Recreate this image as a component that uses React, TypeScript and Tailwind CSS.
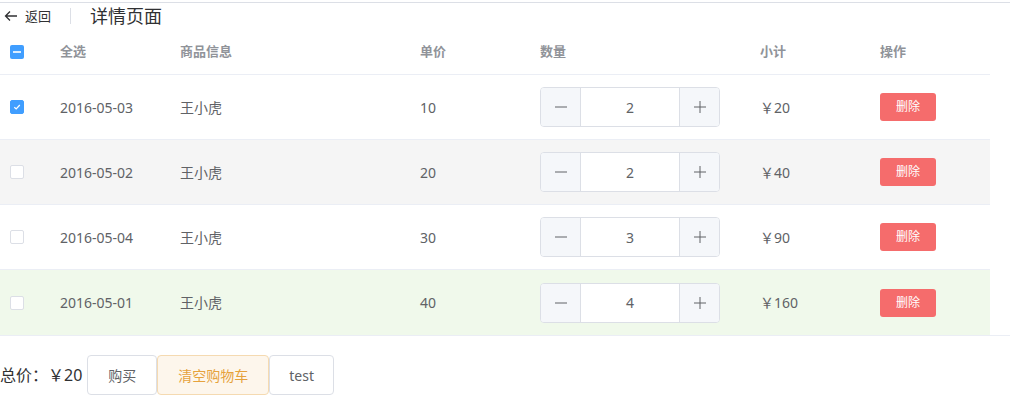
import React from "react";

const rows = [
  { date: "2016-05-03", name: "王小虎", price: 10, qty: 2, sub: 20, checked: true, bg: "bg-white" },
  { date: "2016-05-02", name: "王小虎", price: 20, qty: 2, sub: 40, checked: false, bg: "bg-[#f5f5f5]" },
  { date: "2016-05-04", name: "王小虎", price: 30, qty: 3, sub: 90, checked: false, bg: "bg-white" },
  { date: "2016-05-01", name: "王小虎", price: 40, qty: 4, sub: 160, checked: false, bg: "bg-[#f0f9eb]" },
];

function Check({ checked }: { checked: boolean }) {
  if (checked) {
    return (
      <span className="w-[14px] h-[14px] rounded-[2px] bg-[#409eff] border border-[#409eff] flex items-center justify-center">
        <svg width="10" height="10" viewBox="0 0 10 10">
          <path d="M2.3 5.2 L4.2 7 L7.8 3" stroke="#fff" strokeWidth="1.2" fill="none" />
        </svg>
      </span>
    );
  }
  return <span className="w-[14px] h-[14px] rounded-[2px] bg-white border border-[#dcdfe6] block" />;
}

function NumInput({ v }: { v: number }) {
  return (
    <div className="w-[180px] h-[40px] border border-[#dcdfe6] rounded-[4px] flex overflow-hidden bg-white">
      <div className="w-[40px] h-full bg-[#f5f7fa] border-r border-[#dcdfe6] flex items-center justify-center">
        <svg width="14" height="14" viewBox="0 0 14 14">
          <path d="M1 7 H13" stroke="#606266" strokeWidth="1" />
        </svg>
      </div>
      <div className="flex-1 flex items-center justify-center text-[14px] text-[#606266]">{v}</div>
      <div className="w-[40px] h-full bg-[#f5f7fa] border-l border-[#dcdfe6] flex items-center justify-center">
        <svg width="14" height="14" viewBox="0 0 14 14">
          <path d="M1 7 H13 M7 1 V13" stroke="#606266" strokeWidth="1" />
        </svg>
      </div>
    </div>
  );
}

export default function App() {
  const font = { fontFamily: '"Noto Sans", "Noto Sans CJK SC", sans-serif' };
  return (
    <div className="w-[1010px] h-[404px] bg-white overflow-hidden" style={font}>
      <div className="h-[2px]" />
      <div className="border-t border-[#dcdfe6]" />
      <div className="h-[26px] flex items-center">
        <div className="flex items-center pl-[3px] text-[#303133]">
          <svg width="16" height="16" viewBox="0 0 16 16" className="mr-[6px]">
            <path d="M14 8 H2.5 M7 3.5 L2.5 8 L7 12.5" stroke="#303133" strokeWidth="1.3" fill="none" />
          </svg>
          <span className="text-[13px] leading-none">返回</span>
        </div>
        <div className="w-px h-[16px] bg-[#dcdfe6] mx-[19px]" />
        <span className="text-[18px] leading-none text-[#303133]">详情页面</span>
      </div>
      <div className="w-[1010px] border-b border-[#ebeef5]">
        <div className="w-[990px] h-[46px] flex items-center border-b border-[#ebeef5] text-[13px] font-bold text-[#909399]">
          <div className="w-[50px] pl-[10px] flex items-center">
            <span className="w-[14px] h-[14px] rounded-[2px] bg-[#409eff] flex items-center justify-center">
              <span className="w-[8px] h-[2px] bg-white/80 block" />
            </span>
          </div>
          <div className="w-[120px] pl-[10px]">全选</div>
          <div className="w-[240px] pl-[10px]">商品信息</div>
          <div className="w-[120px] pl-[10px]">单价</div>
          <div className="w-[220px] pl-[10px]">数量</div>
          <div className="w-[120px] pl-[10px]">小计</div>
          <div className="w-[120px] pl-[10px]">操作</div>
        </div>
        {rows.map((r, i) => (
          <div
            key={i}
            className={`w-[990px] h-[65px] flex items-center text-[14px] text-[#606266] ${r.bg} ${i < rows.length - 1 ? "border-b border-[#ebeef5]" : ""}`}
          >
            <div className="w-[50px] pl-[10px] flex items-center">
              <Check checked={r.checked} />
            </div>
            <div className="w-[120px] pl-[10px]">{r.date}</div>
            <div className="w-[240px] pl-[10px]">{r.name}</div>
            <div className="w-[120px] pl-[10px]">{r.price}</div>
            <div className="w-[220px] pl-[10px]">
              <NumInput v={r.qty} />
            </div>
            <div className="w-[120px] pl-[10px]">￥{r.sub}</div>
            <div className="w-[120px] pl-[10px]">
              <button className="w-[56px] h-[28px] rounded-[3px] bg-[#f56c6c] text-white text-[12px] leading-none">删除</button>
            </div>
          </div>
        ))}
      </div>
      <div className="flex items-center mt-[19px] h-[40px]">
        <span className="text-[16px] text-[#303133] mr-[5px]">总价：￥20</span>
        <button className="h-[40px] px-[20px] border border-[#dcdfe6] rounded-[4px] bg-white text-[14px] text-[#606266]">购买</button>
        <button className="h-[40px] px-[20px] border border-[#f5dab1] rounded-[4px] bg-[#fdf6ec] text-[14px] text-[#e6a23c]">清空购物车</button>
        <button className="h-[40px] px-[19px] border border-[#dcdfe6] rounded-[4px] bg-white text-[14px] text-[#606266]">test</button>
      </div>
    </div>
  );
}
